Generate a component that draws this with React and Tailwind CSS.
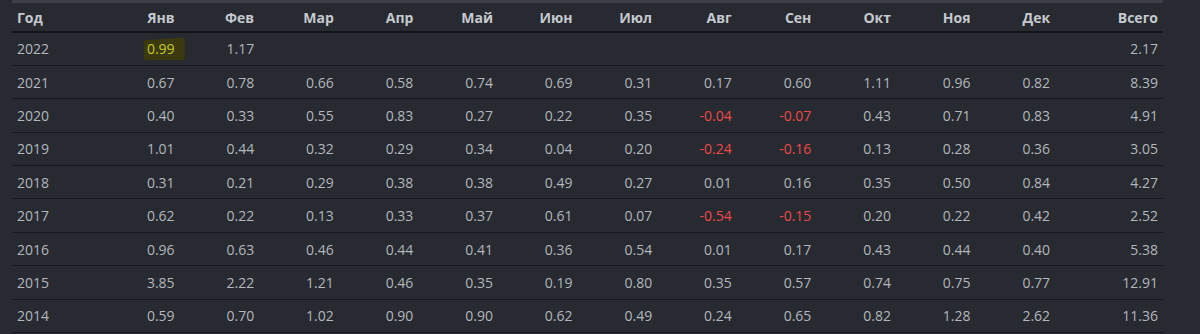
import React from 'react';

const MONTHS = ['Янв', 'Фев', 'Мар', 'Апр', 'Май', 'Июн', 'Июл', 'Авг', 'Сен', 'Окт', 'Ноя', 'Дек'];

const ROWS = [
  ['2022', ['0.99', '1.17', '', '', '', '', '', '', '', '', '', ''], '2.17'],
  ['2021', ['0.67', '0.78', '0.66', '0.58', '0.74', '0.69', '0.31', '0.17', '0.60', '1.11', '0.96', '0.82'], '8.39'],
  ['2020', ['0.40', '0.33', '0.55', '0.83', '0.27', '0.22', '0.35', '-0.04', '-0.07', '0.43', '0.71', '0.83'], '4.91'],
  ['2019', ['1.01', '0.44', '0.32', '0.29', '0.34', '0.04', '0.20', '-0.24', '-0.16', '0.13', '0.28', '0.36'], '3.05'],
  ['2018', ['0.31', '0.21', '0.29', '0.38', '0.38', '0.49', '0.27', '0.01', '0.16', '0.35', '0.50', '0.84'], '4.27'],
  ['2017', ['0.62', '0.22', '0.13', '0.33', '0.37', '0.61', '0.07', '-0.54', '-0.15', '0.20', '0.22', '0.42'], '2.52'],
  ['2016', ['0.96', '0.63', '0.46', '0.44', '0.41', '0.36', '0.54', '0.01', '0.17', '0.43', '0.44', '0.40'], '5.38'],
  ['2015', ['3.85', '2.22', '1.21', '0.46', '0.35', '0.19', '0.80', '0.35', '0.57', '0.74', '0.75', '0.77'], '12.91'],
  ['2014', ['0.59', '0.70', '1.02', '0.90', '0.90', '0.62', '0.49', '0.24', '0.65', '0.82', '1.28', '2.62'], '11.36'],
];

const Cell = ({ value, highlight }) => {
  if (highlight) {
    return (
      <span className="inline-block -mr-[10px] pl-[3px] pr-[10px] py-[1px] bg-[#3a3a0e] text-[#c9c826] rounded-[2px] [clip-path:polygon(0_12%,100%_0,100%_100%,0_100%)]">
        {value}
      </span>
    );
  }
  const neg = value.startsWith('-');
  return <span className={neg ? 'text-[#f04848]' : ''}>{value}</span>;
};

export default function App() {
  return (
    <div
      className="w-[1200px] h-[334px] overflow-hidden bg-[#272a30] pl-[12px]"
      style={{ fontFamily: '"Open Sans", "Noto Sans", sans-serif' }}
    >
      <div className="w-[1151px] h-[3px] bg-[#3d4047]" />
      <table className="w-[1151px] table-fixed border-collapse text-[14px] text-[#b3b7bd]">
        <colgroup>
          <col className="w-[88px]" />
          {MONTHS.map((m) => (
            <col key={m} className="w-[79.6px]" />
          ))}
          <col />
        </colgroup>
        <thead>
          <tr className="h-[29px] border-b-2 border-[#121417]">
            <th className="text-left font-bold text-[#c5c9cf] pl-[5px]">Год</th>
            {MONTHS.map((m) => (
              <th key={m} className="text-right font-bold text-[#c5c9cf] pr-[5px]">
                {m}
              </th>
            ))}
            <th className="text-right font-bold text-[#c5c9cf] pr-[5px]">Всего</th>
          </tr>
        </thead>
        <tbody>
          {ROWS.map(([year, vals, total]) => (
            <tr key={year} className="h-[33.4px] border-b border-[#15171a]">
              <td className="text-left pl-[5px]">{year}</td>
              {vals.map((v, i) => (
                <td key={i} className="text-right pr-[5px]">
                  {v && <Cell value={v} highlight={year === '2022' && i === 0} />}
                </td>
              ))}
              <td className="text-right pr-[5px]">{total}</td>
            </tr>
          ))}
        </tbody>
      </table>
    </div>
  );
}
